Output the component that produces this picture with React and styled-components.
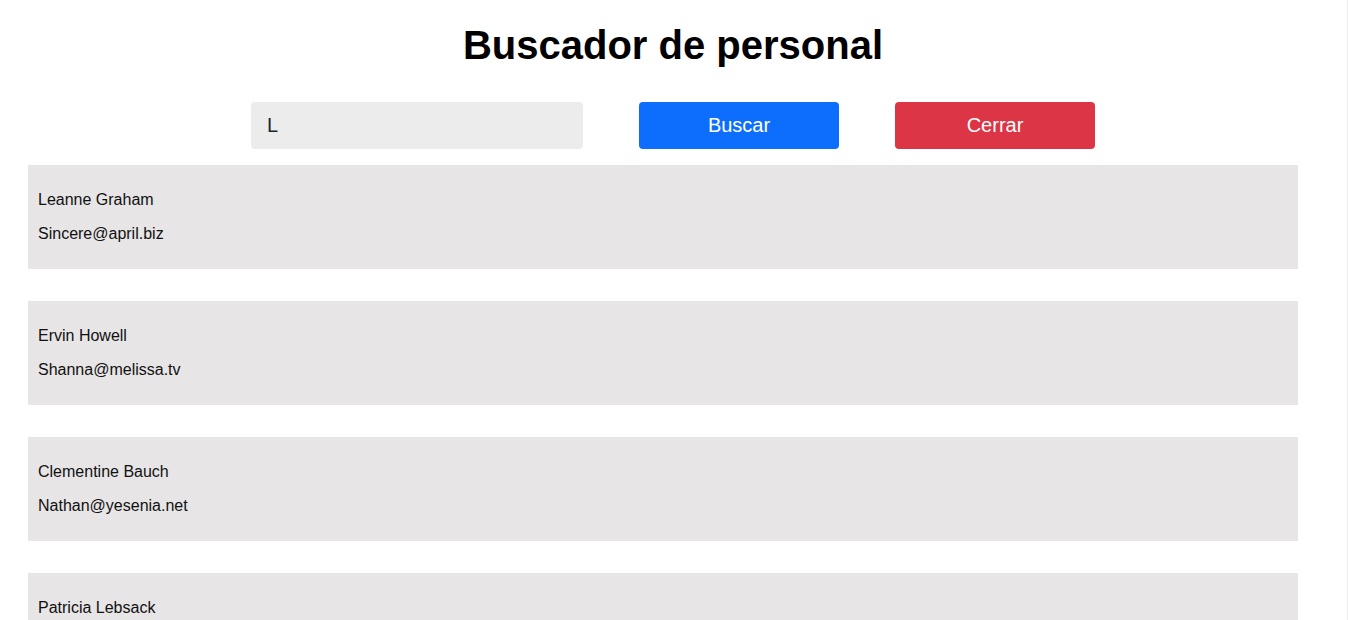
import React, { useState } from "react"
import styled, { createGlobalStyle } from "styled-components"

const GlobalStyle = createGlobalStyle`
  html {
    overflow: hidden;
    border-right: 1px solid #ededed;
  }
  body {
    margin: 8px 9px 8px 8px;
    font-family: "Liberation Sans", Arial, sans-serif;
    background: #ffffff;
    color: #000000;
  }
`;

const Page = styled.div`
  display: flex;
  flex-direction: column;
  align-items: center;
`;

const Title = styled.h1`
  font-size: 40px;
  font-weight: 700;
  margin: 15px 0 34px;
  line-height: 45px;
`;

const SearchBar = styled.div`
  display: flex;
  gap: 56px;
  margin-bottom: 16px;
`;

const Input = styled.input`
  width: 332px;
  height: 47px;
  box-sizing: border-box;
  border: none;
  border-radius: 4px;
  background: #ececec;
  padding: 0 16px;
  font-family: "Liberation Sans", Arial, sans-serif;
  font-size: 20px;
  color: #212529;
  outline: none;
`;

const Button = styled.button`
  width: 200px;
  height: 47px;
  border: none;
  border-radius: 4px;
  background: ${(p) => (p.$variant === "danger" ? "#dc3545" : "#0d6efd")};
  color: #ffffff;
  font-family: "Liberation Sans", Arial, sans-serif;
  font-size: 20px;
  cursor: pointer;
`;

const List = styled.div`
  align-self: flex-start;
  width: 1270px;
  margin-left: 20px;
  display: flex;
  flex-direction: column;
  gap: 32px;
`;

const Card = styled.div`
  background: #e7e5e6;
  padding: 10px;
`;

const CardText = styled.p`
  margin: 16px 0;
  font-size: 16px;
  line-height: 18px;
  color: #111111;
`;

const users = [
  { name: "Leanne Graham", email: "Sincere@april.biz" },
  { name: "Ervin Howell", email: "Shanna@melissa.tv" },
  { name: "Clementine Bauch", email: "Nathan@yesenia.net" },
  { name: "Patricia Lebsack", email: "Julianne.OConner@kory.org" },
  { name: "Chelsey Dietrich", email: "Lucio_Hettinger@annie.ca" },
];

export default function App() {
  const [query, setQuery] = useState("L");
  return (
    <>
      <GlobalStyle />
      <Page>
        <Title>Buscador de personal</Title>
        <SearchBar>
          <Input value={query} onChange={(e) => setQuery(e.target.value)} />
          <Button>Buscar</Button>
          <Button $variant="danger">Cerrar</Button>
        </SearchBar>
        <List>
          {users.map((u) => (
            <Card key={u.email}>
              <CardText>{u.name}</CardText>
              <CardText>{u.email}</CardText>
            </Card>
          ))}
        </List>
      </Page>
    </>
  )
}
